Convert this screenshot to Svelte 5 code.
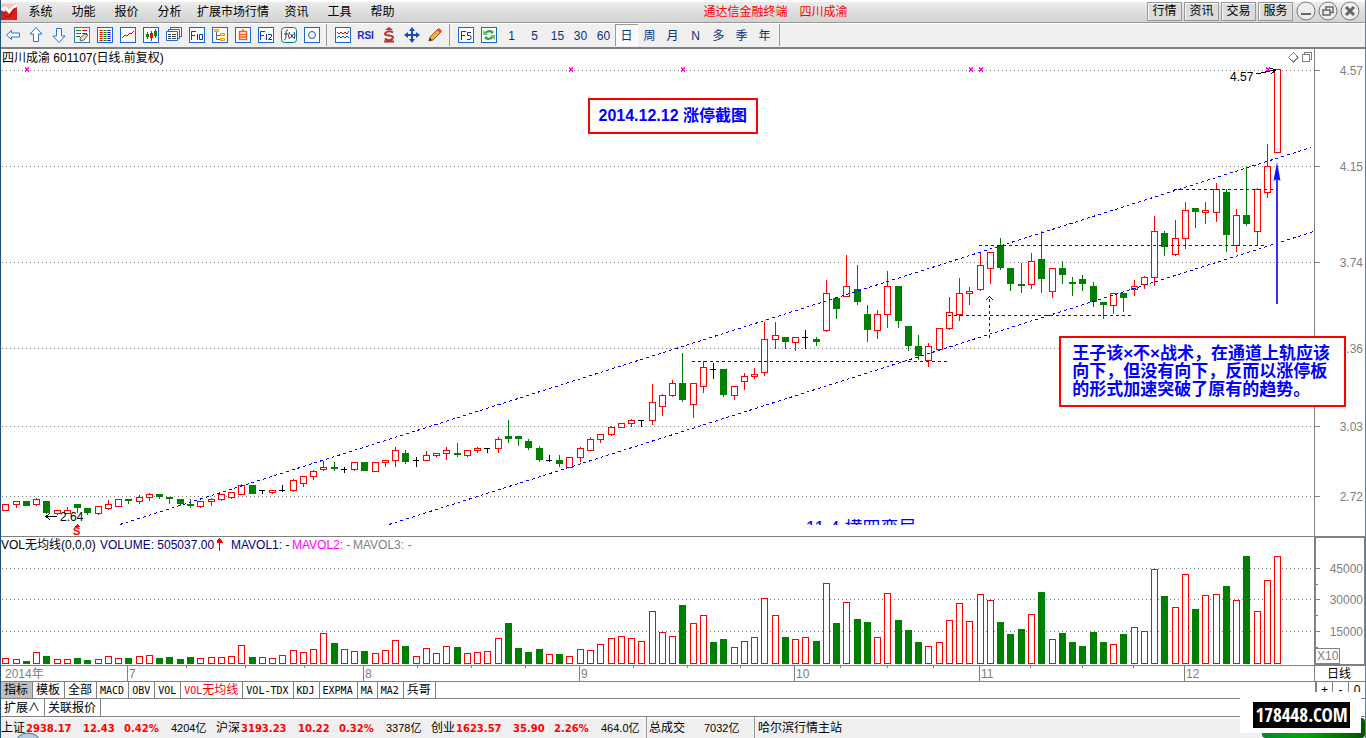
<script>
  const menus = ['系统', '功能', '报价', '分析', '扩展市场行情', '资讯', '工具', '帮助'];
  const modules = ['行情', '资讯', '交易', '服务'];
  const periods = ['1', '5', '15', '30', '60', '日', '周', '月', 'N', '多', '季', '年'];
  // Latin part first, Chinese part second
  const tabs = [
    ['', '指标'], ['', '模板'], ['', '全部'], ['MACD', ''], ['OBV', ''], ['VOL', ''], ['VOL', '无均线'],
    ['VOL-TDX', ''], ['KDJ', ''], ['EXPMA', ''], ['MA', ''], ['MA2', ''], ['', '兵哥'],
  ];
  const indices = [
    ['上证', '2938.17', '12.43', '0.42%', '4204亿'],
    ['沪深', '3193.23', '10.22', '0.32%', '3378亿'],
    ['创业', '1623.57', '35.90', '2.26%', '464.0亿'],
  ];

  // One entry per trading day: kind, high, body top, body bottom, low
  const days = `r504,504,511,511 r501,501,505,508 g501,501,506,506 r498,499,505,506 g501,501,513,514
r510,510,514,515 r507,510,514,514 g504,504,508,513 g508,508,513,515 r506,506,514,515
r500,504,509,510 r499,499,507,507 g499,499,501,504 r495,497,502,504 r493,494,498,501
g494,494,497,499 g497,497,499,504 g499,499,504,506 g499,504,506,508 r501,501,507,508
r498,499,502,506 r494,494,500,501 r492,492,498,499 r484,485,495,495 g485,485,494,494
k490,490,491,494 r490,490,493,494 k485,490,491,492 r479,480,491,492 r476,476,484,487
r470,471,477,480 r461,467,470,471 g462,467,469,471 k467,469,470,473 r462,462,470,471
g462,462,471,471 r462,462,472,472 r460,460,463,467 r447,450,461,467 g450,453,462,464
k457,460,461,467 r451,455,461,461 r453,453,456,457 r447,450,454,460 g443,453,455,457
r450,450,456,457 r447,448,451,453 k448,448,449,453 r437,439,449,453 g420,436,439,443
g436,436,439,446 g439,441,448,450 g446,448,460,462 k455,460,461,462 g455,460,464,467
r457,457,468,468 r447,448,458,462 r437,439,451,451 r434,434,440,443 r426,427,435,436
r423,423,428,428 r419,420,424,427 k420,420,421,427 r384,402,421,425 r394,395,407,416
r380,383,396,397 g353,383,400,402 r383,383,405,418 r361,367,387,393 k363,369,370,379
g369,369,395,397 r386,386,396,400 r373,376,382,390 r368,374,377,379 r322,339,373,376
r322,335,340,349 g337,337,342,349 r337,337,343,351 k330,337,338,349 g337,339,342,346
r280,293,331,332 g298,298,309,319 r255,286,297,297 g265,289,302,305 g305,314,330,342
r310,314,331,339 r271,286,315,328 g286,286,321,328 g326,326,346,351 g335,346,356,360
r343,346,361,367 r328,328,350,350 r297,312,329,330 r278,293,315,321 r287,291,294,305
r253,265,290,291 r252,252,269,284 g238,245,268,270 g268,268,284,291 g263,284,286,293
r253,261,285,289 g231,259,279,293 r268,268,292,298 g261,268,275,284 g277,282,284,296
g275,279,284,291 g282,286,302,307 g302,302,305,319 r293,293,306,314 g293,293,298,312
r280,286,290,296 r276,277,285,289 r216,231,278,286 g231,233,247,256 r220,238,255,256
r202,210,239,249 g208,208,212,228 r202,210,213,224 r183,189,213,222 g189,192,235,252
r209,215,246,252 g166,215,224,226 r188,189,232,246 r144,166,193,198 r69,69,153,153`;

  const volumeTops = [
    658, 659, 661, 652, 656, 659, 659, 658, 660, 659, 656, 658, 658, 656, 655, 658, 657, 659, 657, 658,
    657, 657, 656, 645, 657, 657, 658, 655, 650, 652, 649, 633, 643, 649, 651, 651, 653, 650, 640, 646,
    656, 648, 653, 646, 647, 653, 652, 651, 638, 623, 648, 652, 649, 654, 654, 656, 649, 650, 644, 638,
    636, 638, 641, 611, 632, 636, 605, 623, 615, 642, 639, 647, 641, 637, 598, 615, 637, 639, 637, 641,
    583, 623, 602, 619, 622, 637, 593, 620, 630, 642, 646, 642, 620, 603, 621, 594, 600, 622, 634, 629,
    614, 592, 639, 633, 642, 646, 632, 642, 644, 634, 627, 631, 569, 596, 607, 574, 609, 595, 594, 586,
    600, 556, 611, 580, 556,
  ];

  const candles = days.split(/\s+/).map((entry, i) => {
    const [high, top, bottom, low] = entry.slice(1).split(',').map(Number);
    return { kind: entry[0], high, top, bottom, low, x: Math.floor(5.9 + 10.256 * i), vol: volumeTops[i] };
  });
  const volUp = (c, i) => c.kind === 'r' || (c.kind === 'k' && i !== 69);

  const prices = [[70, '4.57'], [166, '4.15'], [262, '3.74'], [348, '3.36'], [426, '3.03'], [496, '2.72']];
  const volumes = [[568, '45000'], [599, '30000'], [631, '15000']];
  const months = [[127, '7'], [363, '8'], [579, '9'], [794, '10'], [979, '11'], [1184, '12']];
  const weeks = [186, 245, 304, 417, 471, 525, 633, 687, 740, 840, 887, 933, 1030, 1082, 1133];
  const marks = [27, 571, 683, 971, 981, 1268];
</script>

<div class="app">
  <header class="menubar">
    <svg class="logo" width="16" height="16" viewBox="0 0 16 16" aria-hidden="true">
      <rect width="16" height="16" fill="#d8201c" />
      <path d="M0 0H16V3L10 6 8 9 3 6 0 7Z" fill="#f6c4bc" />
      <path d="M0 5L3 8 5 5 8 10 12 5 16 2V0L10 3 8 6 5 2 1 4Z" fill="#fff" />
      <path d="M2 9l3 4 4-1 5-8" fill="none" stroke="#a80c0c" />
    </svg>
    <nav class="menus">
      {#each menus as m}<button>{m}</button>{/each}
    </nav>
    <div class="title"><span>通达信金融终端</span><span>四川成渝</span></div>
    <div class="modules">
      {#each modules as m}<button class="module">{m}</button>{/each}
    </div>
    <div class="modules wins">
      <button class="win" aria-label="最小化"><svg viewBox="0 0 20 20"><circle cx="10" cy="10" r="9" /><path d="M5 13h10" stroke-width="2" /></svg></button>
      <button class="win" aria-label="还原"><svg viewBox="0 0 20 20"><circle cx="10" cy="10" r="9" /><path d="M8 8.500V6h7v5.500h-2.500M5 9h7v5H5z" stroke-width="1.500" /></svg></button>
      <button class="win" aria-label="关闭"><svg viewBox="0 0 20 20"><circle cx="10" cy="10" r="9" /><path d="M6 6l8 8M14 6l-8 8" stroke-width="3" /></svg></button>
    </div>
  </header>

  <div class="toolbar">
    <button aria-label="后退"><svg viewBox="0 0 16 16"><path class="arrow" d="M1.500 8L6.500 3.500V6H14.500V10H6.500V12.500Z" /></svg></button>
    <button aria-label="上移"><svg viewBox="0 0 16 16"><path class="arrow" d="M8 .5L14 7H10.500V14.500H5.500V7H2Z" /></svg></button>
    <button aria-label="下移"><svg viewBox="0 0 16 16"><path class="arrow" d="M8 15.500L14 9H10.500V1.500H5.500V9H2Z" /></svg></button>
    <button aria-label="报价编辑"><svg viewBox="0 0 16 16"><rect class="frame slate" x=".5" y=".5" width="15" height="15" /><path d="M2 3.500h5M2 6.500h5M2 9.500h4" stroke="#080" /><path d="M8 3.500h5M8 6.500h5" stroke="#e00" /><path d="M6.500 14l-.5-3 5-4 3 1-4 5z" fill="#ddd" stroke="#666" /></svg></button>
    <button aria-label="报价表"><svg viewBox="0 0 16 16"><rect class="frame" x=".5" y=".5" width="15" height="15" /><g stroke-width="3" stroke-dasharray="1 1"><path d="M4 3v11" stroke="#e00" /><path d="M8 3v11" stroke="#080" /><path d="M12 3v11" stroke="#00e" /></g></svg></button>
    <button aria-label="分时图"><svg viewBox="0 0 16 16"><rect class="frame" x=".5" y=".5" width="15" height="15" /><path d="M2 11L5 8 7 9 10 6 11 7 14 4" fill="none" stroke="#e00" /></svg></button>
    <button aria-label="K线图"><svg viewBox="0 0 16 16"><rect class="frame" x=".5" y=".5" width="15" height="15" /><path d="M4.500 5v7M12.500 2v9" stroke="#080" /><path d="M8.500 4v10" stroke="#e00" /><path d="M3 7h3v3H3zM11 4h3v5h-3z" fill="#080" /><path d="M7 6h3v5H7z" fill="#e00" /></svg></button>
    <button aria-label="多窗口"><svg viewBox="0 0 16 16"><path class="frame" d="M4.500 3V.5h11v9H13M2.500 5V2.500h11v9H12M.5 4.500h11v9H.5z" /><path d="M2 7.500h3M6 7.500h4M2 9.500h3M6 9.500h4M2 11.500h3M6 11.500h4" stroke="#444" /></svg></button>
    <button aria-label="F10"><svg viewBox="0 0 16 16"><rect class="frame" x=".5" y=".5" width="15" height="15" /><path class="pen" d="M2.500 13V4.500H7M2.500 8.500H6M8.500 7v6M10.500 7.500h3v5h-3z" /></svg></button>
    <button aria-label="板块树"><svg viewBox="0 0 16 16"><rect class="frame" x=".5" y=".5" width="15" height="15" /><path d="M4.500 5v7.500H8M4.500 8.500H8" fill="none" stroke="#666" /><path d="M2.500 2.500h4v2h-4zM8.500 6.500h4v2h-4zM8.500 11.500h4v2h-4z" fill="#fe9" stroke="#e90" /></svg></button>
    <button aria-label="自选股"><svg viewBox="0 0 16 16"><rect class="frame" x=".5" y=".5" width="15" height="15" /><path d="M4.500 4.500h7v8h-7zM4.500 7.500h7M4.500 10h7M8 2v2" fill="none" stroke="#f06020" stroke-width="1.500" /></svg></button>
    <button aria-label="F12"><svg viewBox="0 0 16 16"><rect class="frame" x=".5" y=".5" width="15" height="15" /><path class="pen" d="M2.500 13V4.500H7M2.500 8.500H6M8.500 7v6M10 7.500h3.500v2L10.500 12.500H14" /></svg></button>
    <button aria-label="公式"><svg viewBox="0 0 16 16"><rect x=".5" y=".5" width="15" height="15" rx="3" fill="#fff" stroke="#057a7a" /><path d="M7 3C5 3 5 5 5 7S5 13 3 13M3 7h4M8.500 5q-2 4 0 7M13 5q2 4 0 7M9.500 7l3 4M12.500 7l-3 4" fill="none" stroke="#234" /></svg></button>
    <button aria-label="圈选"><svg viewBox="0 0 16 16"><rect class="frame" x=".5" y=".5" width="15" height="15" /><circle cx="8" cy="8" r="3.500" fill="none" stroke="#15c" /></svg></button>
    <i class="sep"></i>
    <button aria-label="叠加"><svg viewBox="0 0 16 16"><rect class="frame" x=".5" y=".5" width="15" height="15" /><path d="M2 5l2 2 2-2 2 2 2-2 2 2 2-3" fill="none" stroke="#e00" /><path d="M2 11l2-2 2 2 2-2 2 2 2-2 2 2" fill="none" stroke="#15c" /></svg></button>
    <button class="rsi">RSI</button>
    <button aria-label="除权"><svg viewBox="0 0 16 16"><path d="M8 0l4 3H4z" fill="#b33" /><path d="M12 5.500Q8 3 5 5.500T8 8.500 11 12 4 11.500M3 14.500h10" fill="none" stroke="#b33" stroke-width="2" /></svg></button>
    <button aria-label="移动"><svg viewBox="0 0 16 16"><path d="M8 0l3 4H9v3h3V5l4 3-4 3V9H9v3h2l-3 4-3-4h2V9H4v2L0 8l4-3v2h3V4H5z" fill="#1450b4" /></svg></button>
    <button aria-label="画线"><svg viewBox="0 0 16 16"><path d="M2 14l1-4L11 2l3 3-8 8z" fill="#f5b042" stroke="#8a5a20" /><path d="M10 3l2-2 3 3-2 2z" fill="#d44" /><path d="M2 14l1-3 2 2z" fill="#222" /></svg></button>
    <i class="sep"></i>
    <button aria-label="F5"><svg viewBox="0 0 16 16"><rect class="frame" x=".5" y=".5" width="15" height="15" /><path class="pen" d="M3.500 13V4.500H8M3.500 8.500H7M13 5.500H9.500v3H12q1 0 1 2t-1 2H9" /></svg></button>
    <button aria-label="刷新"><svg viewBox="0 0 16 16"><rect class="frame" x=".5" y=".5" width="15" height="15" /><path d="M4 6.500Q8 2 12 6M12 9.500Q8 14 4 10" fill="none" stroke="#3aa53a" stroke-width="2.500" /><path d="M2 3v5h5zM14 13V8H9z" fill="#6c6" /></svg></button>
    {#each periods as p}<button class="period" class:on={p === '日'}>{p}</button>{/each}
    <i class="sep"></i>
  </div>

  <main>
    <section class="pane">
      <svg class="plot" viewBox="1 49 1364 487">
        <g class="grid">
          {#each prices as [y]}<line x1="2" x2="1314" y1={y + 0.5} y2={y + 0.5} />{/each}
        </g>
        <g class="axis">
          <path d="M1314.500 49V536" />
          {#each prices as [y]}<line x1="1314" x2="1320" y1={y + 0.5} y2={y + 0.5} />{/each}
        </g>
        {#each prices as [y, label]}<text class="gray end" x="1363" y={y + 5}>{label}</text>{/each}
        <text x="2" y="62">四川成渝 601107(日线.前复权)</text>
        <path class="corner" d="M1293.500 52.500L1298 57.500 1293.500 62 1288.500 57.500ZM1302.500 54.500h7v7h-7zM1304.500 54V52.500h7v7H1310" />
        {#each marks as x}<path class="mark" d="M{x - 2} 67.500l4 4m0 -4l-4 4" />{/each}

        {#each candles as c}
          <g class={c.kind}>
            {#if c.high < c.top}<rect class="fill" x={c.x} y={c.high} width="1" height={c.top - c.high} />{/if}
            {#if c.low > c.bottom}<rect class="fill" x={c.x} y={c.bottom} width="1" height={c.low - c.bottom} />{/if}
            {#if c.kind === 'r'}
              <rect class="hollow" x={c.x - 2.5} y={c.top + 0.5} width="6" height={c.bottom - c.top - 1} />
            {:else}
              <rect class="fill" x={c.x - 3} y={c.top} width={c.kind === 'k' ? 6 : 7} height={c.bottom - c.top} />
            {/if}
          </g>
        {/each}

        <g class="trend">
          <path d="M120 524.500L1311 147.500M389 524.500L1314 231.500" />
          <path d="M692 361.500H947M979 245.500H1264M948 315.500H1131M1174 189.500H1274M989.500 338V299" />
        </g>
        <path class="tip" d="M985.500 300.500L989.500 296.500 993.500 300.500" />
        <path d="M1277 304V178" stroke="#33f" stroke-width="2" />
        <path class="head" d="M1277 162L1280.500 181 1277 179 1273.500 181Z" />
        <path class="pointer" d="M46 516.500H57M50 513L46 516.500 50 520M1256 74L1275 70M1270 68L1276 70 1271 74" />
        <text x="60" y="521">2.64</text>
        <text x="1230" y="81">4.57</text>
        <path d="M77 524l3 3h-6z" fill="red" />
        <text class="split" x="73" y="535">S</text>
      </svg>
      <div class="clipped">11.4 横四变局</div>
      <div class="note small">2014.12.12 涨停截图</div>
      <div class="note large">王子该×不×战术，在通道上轨应该<br />向下，但没有向下，反而以涨停板<br />的形式加速突破了原有的趋势。</div>
    </section>

    <svg class="plot" viewBox="1 536 1364 146">
      <g class="grid">
        {#each volumes as [y]}<line x1="2" x2="1314" y1={y + 0.5} y2={y + 0.5} />{/each}
      </g>
      <g class="axis">
        <path d="M1 536.500H1365M1 665.500H1365M1 681.500H1365M1314.500 536V682" />
        {#each volumes as [y]}<line x1="1315" x2="1320" y1={y + 0.5} y2={y + 0.5} /><line x1="1315" x2="1318" y1={y + 16.5} y2={y + 16.5} />{/each}
        {#each months as [x]}<line x1={x + 0.5} x2={x + 0.5} y1="666" y2="681" />{/each}
        {#each weeks as x}<line x1={x + 0.5} x2={x + 0.5} y1="666" y2="668" />{/each}
        <rect x="1315.500" y="537.500" width="49" height="127" />
        <rect x="1315.500" y="648.500" width="24" height="15" />
      </g>
      {#each volumes as [y, label]}<text class="gray end" x="1363" y={y + 5}>{label}</text>{/each}
      <text class="gray" x="1317" y="660">X10</text>
      <text class="gray" x="5" y="678">2014年</text>
      {#each months as [x, label]}<text class="gray" x={x + 2} y="678">{label}</text>{/each}
      <text x="1327" y="678">日线</text>
      <text x="1" y="549">VOL无均线(0,0,0)</text>
      <text class="navy" x="100" y="549">VOLUME: 505037.00</text>
      <path d="M219.500 551V539M216.500 542.500L219.500 538.500 222.500 542.500" fill="red" stroke="red" />
      <text class="navy" x="231" y="549">MAVOL1: -</text>
      <text class="pink" x="292" y="549">MAVOL2: -</text>
      <text class="gray" x="353" y="549">MAVOL3: -</text>
      {#each candles as c, i}
        {#if volUp(c, i)}
          <rect class="volup" x={c.x - 2.5} y={c.vol + 0.5} width="6" height={663 - c.vol} />
        {:else}
          <rect class="voldown" x={c.x - 3} y={c.vol} width="7" height={664 - c.vol} />
        {/if}
      {/each}
    </svg>
  </main>

  <div class="tabs">
    {#each tabs as [latin, han], i}
      <button class:picked={i === 0} class:active={latin && han}>{#if latin}<span class="latin">{latin}</span>{/if}{han}</button>
    {/each}
    <span class="zoomers"><button>+</button><button>-</button><button>0</button></span>
  </div>
  <div class="tabs second"><button>扩展∧</button><button>关联报价</button></div>

  <footer class="status">
    {#each indices as [name, value, change, percent, turnover]}
      <div class="index"><span>{name}</span><b>{value}</b><b>{change}</b><b>{percent}</b><span class="num">{turnover}</span></div>
    {/each}
    <div class="total"><span>总成交</span><span class="num">7032亿</span></div>
    <div class="host">哈尔滨行情主站</div>
  </footer>
  <svg class="orb" width="28" height="6" viewBox="0 0 28 6" aria-hidden="true"><ellipse cx="14" cy="12" rx="13" ry="11" fill="#b4cbe0" stroke="#48708f" /></svg>
  <div class="green"></div>
  <div class="stamp"><span>178448.COM</span></div>
</div>

<style>
  :global(body) { margin: 0; background: #fff; }
  .app {
    position: relative;
    overflow: hidden;
    border-left: 1px solid #1d527c;
    border-right: 1px solid #5d7f9c;
    box-sizing: border-box;
    font: 12px/16px "Liberation Sans", "Noto Sans CJK SC", sans-serif;
    color: #000;
  }
  button { font: inherit; color: inherit; background: none; border: 0; padding: 0; margin: 0; }
  .menubar {
    display: flex;
    align-items: center;
    height: 22px;
    line-height: 20px;
    background: linear-gradient(#fff 0 2px, #ececec 2px, #d2d2d2);
    border-bottom: 1px solid #999;
  }
  .logo { margin-top: 2px; flex: none; }
  .menus { display: flex; margin-left: 2px; }
  .menus button { min-width: 43px; padding: 2px 6px 0; }
  .title { display: flex; gap: 12px; margin: 0 auto; padding-top: 2px; color: red; }
  .modules { display: flex; align-items: center; gap: 2px; }
  .wins { padding: 0 5px 0 3px; }
  .module {
    width: 35px;
    height: 19px;
    line-height: 17px;
    box-sizing: border-box;
    border: 1px solid #999;
    box-shadow: inset 1px 1px #f8f8f8;
    background: #dcdcdc;
  }
  .win { width: 20px; height: 20px; }
  .win svg { display: block; width: 20px; height: 20px; fill: #eee; stroke: #777; }
  .win path { fill: none; stroke: #666; }
  .toolbar {
    display: flex;
    align-items: center;
    height: 24px;
    background: #f0f0f0;
    box-shadow: inset 0 1px #fff;
    border-bottom: 2px solid #808080;
    color: #0a2f80;
  }
  .toolbar button { width: 23px; height: 22px; display: flex; align-items: center; justify-content: center; }
  .toolbar svg { width: 16px; height: 16px; }
  .toolbar .period { padding-top: 1px; }
  .toolbar .on { background: #fafafa; box-shadow: inset 1px 1px #999, inset -1px -1px #fff; }
  .sep { width: 8px; height: 22px; background: linear-gradient(#999, #999) 3px 0 / 1px 100% no-repeat; }
  .toolbar .rsi { font: bold 10px "Liberation Sans", sans-serif; color: #22d; }
  .arrow { fill: #fff; stroke: #2a6fe0; }
  .frame { fill: #fff; stroke: #1668d8; }
  .slate { stroke: #47a; }
  .pen { fill: none; stroke: #11399c; }
  .pane { position: relative; }
  .plot { display: block; width: 100%; height: auto; shape-rendering: crispEdges; }
  .plot text { font-size: 12px; }
  .plot .gray { fill: #808080; }
  .plot .navy { fill: #000080; }
  .plot .pink { fill: #f0f; }
  .plot .end { text-anchor: end; }
  .plot .split { font-size: 11px; font-weight: bold; fill: red; }
  .grid line { stroke: #808080; stroke-dasharray: 1 3; }
  .axis { stroke: #808080; fill: none; }
  .corner { fill: none; stroke: #808080; }
  .mark { stroke: #f0f; }
  .r .fill { fill: red; }
  .g .fill { fill: #008000; }
  .k .fill { fill: #000; }
  .hollow, .volup { fill: #fff; stroke: red; }
  .voldown { fill: #008000; }
  .trend { stroke: #00f; stroke-dasharray: 3 3; fill: none; }
  .tip { stroke: #00f; fill: none; }
  .head { fill: #11f; shape-rendering: auto; }
  .pointer { stroke: #000; fill: none; }
  .note {
    position: absolute;
    box-sizing: border-box;
    background: #fff;
    border: 2px solid red;
    color: #00f;
    font-weight: bold;
    white-space: nowrap;
  }
  .small { left: 43%; top: 10%; padding: 6px 9px; font-size: 16px; line-height: 20px; }
  .large { right: 19px; top: 59%; padding: 7px 14px 6px 11px; font-size: 17px; line-height: 18px; }
  .clipped {
    position: absolute;
    left: 59%;
    bottom: 11px;
    height: 6px;
    overflow: hidden;
    font-size: 18px;
    line-height: 18px;
    color: #00f;
  }
  .tabs {
    display: flex;
    height: 16px;
    border-bottom: 1px solid #808080;
    line-height: 17px;
  }
  .tabs button { padding: 0 4px 0 3px; border-right: 1px solid #808080; white-space: nowrap; }
  .tabs .latin { font: 10px/16px "DejaVu Sans Mono", monospace; }
  .tabs .picked { background: #c0c0c0; }
  .tabs .active { color: red; }
  .second { height: 17px; line-height: 18px; }
  .zoomers { display: flex; margin-left: auto; border-left: 2px solid #808080; }
  .tabs .zoomers button { width: 16px; padding: 0; }
  .tabs .zoomers button:last-child { border: 0; }
  .status { display: flex; height: 21px; line-height: 23px; background: #f0f0f0; box-shadow: inset 0 2px #fafafa; white-space: nowrap; }
  .index { display: grid; grid-template-columns: 25px 57px 41px 47px 45px; }
  .index b { font-family: "DejaVu Sans", sans-serif; font-size: 10px; color: red; }
  .num { font-size: 11px; }
  .total { display: grid; grid-template-columns: 55px 50px; padding-left: 2px; border-left: 1px solid #999; }
  .host { padding-left: 3px; border-left: 1px solid #999; }
  .orb { position: absolute; left: 13px; bottom: 0; }
  .green { position: absolute; right: 0; bottom: 0; width: 103px; height: 20px; background: linear-gradient(90deg, #083, #0a0 40%, #050); border-radius: 4px; }
  .stamp { position: absolute; right: 4px; bottom: 5px; width: 121px; height: 41px; box-sizing: border-box; padding: 10px 11px 5px 13px; background: #fff; }
  .stamp span {
    display: block;
    background: #000;
    color: #fff;
    font: bold 19px/26px "Open Sans Condensed", "Liberation Sans Narrow", sans-serif;
    text-align: center;
  }
</style>
